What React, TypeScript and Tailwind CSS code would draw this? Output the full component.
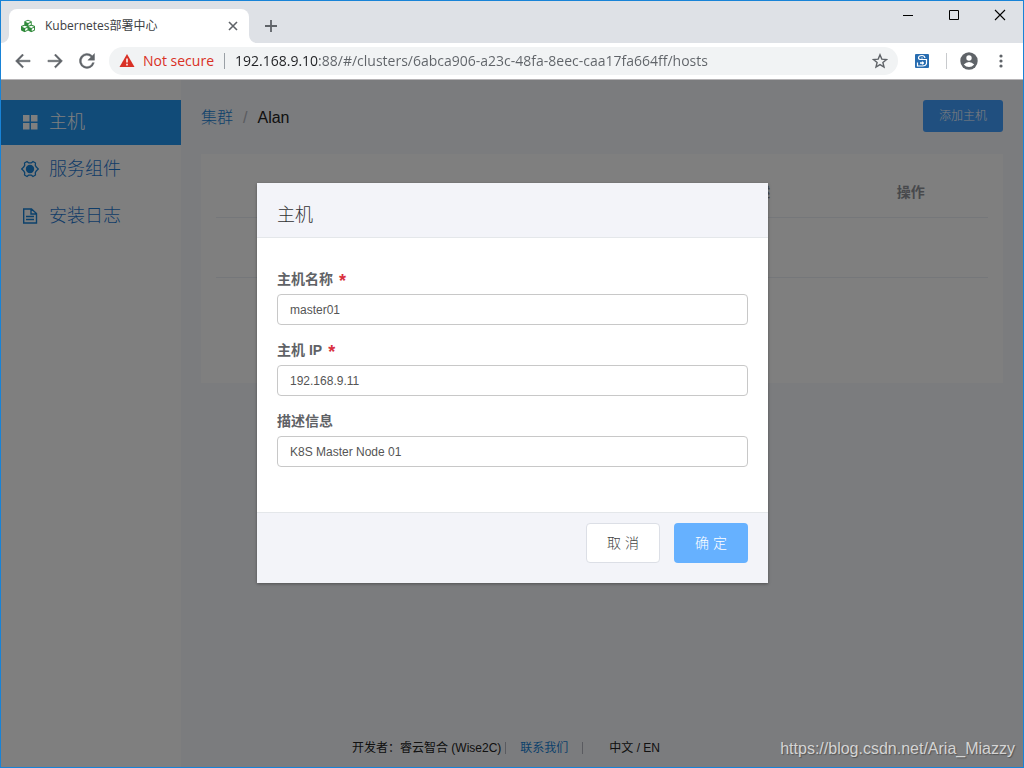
import type { ReactNode } from "react";
import { FaCubes } from "react-icons/fa";

const ui = "font-['Liberation_Sans','Noto_Sans_CJK_SC',sans-serif]";
const chromeFont = "font-['Open_Sans','Noto_Sans_CJK_SC',sans-serif]";

function WindowControls() {
  return (
    <div className="flex h-7 items-center">
      <button aria-label="Minimize" className="flex w-[46px] justify-center">
        <svg className="h-3 w-3" viewBox="0 0 12 12"><path d="M1 6.5H11" stroke="#000" /></svg>
      </button>
      <button aria-label="Maximize" className="flex w-[46px] justify-center">
        <svg className="h-3 w-3" viewBox="0 0 12 12"><path d="M1.5 1.5h9v9h-9z" fill="none" stroke="#000" /></svg>
      </button>
      <button aria-label="Close" className="flex w-[46px] justify-center">
        <svg className="h-3 w-3" viewBox="0 0 12 12"><path d="m1 1 10 10M11 1 1 11" stroke="#000" strokeWidth="1.1" /></svg>
      </button>
    </div>
  );
}

function TabStrip() {
  return (
    <div className={`${chromeFont} flex h-[42px] justify-between bg-[#dee1e6]`}>
      <div className="flex items-end">
        <svg className="h-2 w-2" viewBox="0 0 8 8" aria-hidden="true"><path d="M8 0v8H0A8 8 0 0 0 8 0" fill="#fff" /></svg>
        <div className="flex h-[34px] w-60 items-center rounded-t-lg bg-white pr-2.5 pl-3">
          <FaCubes className="h-3.5 w-3.5 text-[#2f8a3a]" aria-hidden="true" />
          <span className="ml-2.5 flex-1 text-xs text-[#3c4043]">Kubernetes部署中心</span>
          <button aria-label="Close tab">
            <svg className="h-3 w-3" viewBox="0 0 12 12"><path d="m2 2 8 8M10 2l-8 8" stroke="#5f6368" strokeWidth="1.6" /></svg>
          </button>
        </div>
        <svg className="h-2 w-2" viewBox="0 0 8 8" aria-hidden="true"><path d="M0 0v8h8A8 8 0 0 1 0 0" fill="#fff" /></svg>
        <button aria-label="New tab" className="flex h-[34px] w-7 items-center justify-center">
          <svg className="h-3.5 w-3.5" viewBox="0 0 14 14"><path d="M7 1v12M1 7h12" stroke="#5f6368" strokeWidth="1.8" /></svg>
        </button>
      </div>
      <WindowControls />
    </div>
  );
}

function NavButton({ label, d }: { label: string; d: string }) {
  return (
    <button aria-label={label} className="flex w-8 justify-center">
      <svg className="h-5 w-5" viewBox="0 0 24 24" fill="#5f6368" stroke="#5f6368" strokeWidth="0.5"><path d={d} /></svg>
    </button>
  );
}

function Toolbar() {
  return (
    <div className={`${chromeFont} flex h-[37px] items-center border-b border-[#b6b4b6] bg-white pr-3.5 pl-1.5`}>
      <NavButton label="Back" d="M20.5 11H6.8l5.9-5.9L11.3 3.7 3 12l8.3 8.3 1.4-1.4L6.8 13h13.7z" />
      <NavButton label="Forward" d="M3.5 11h13.7l-5.9-5.9 1.4-1.4L21 12l-8.3 8.3-1.4-1.4 5.9-5.9H3.5z" />
      <NavButton label="Reload" d="M18.4 5.6A9 9 0 1 0 20.7 14h-2.2a6.8 6.8 0 1 1-1.7-6.8L13 11h8V3z" />
      <div className="ml-1.5 flex h-7 flex-1 items-center rounded-full bg-[#f1f3f4] px-2.5">
        <svg className="h-4 w-4" viewBox="0 0 16 16" aria-hidden="true">
          <path d="M8 1 15.5 14H.5Z" fill="#d93025" />
          <path d="M8 5.5V9.5M8 10.8v1.6" stroke="#fff" strokeWidth="1.5" />
        </svg>
        <span className="ml-2 text-sm text-[#d93025]">Not secure</span>
        <span className="mr-2.5 ml-2.5 h-4 w-px bg-[#9aa0a6]" />
        <input
          aria-label="Address"
          className="min-w-0 flex-1 bg-linear-to-r from-[#202124] from-[83px] to-[#5f6368] to-[83px] bg-clip-text text-sm text-transparent outline-none"
          defaultValue="192.168.9.10:88/#/clusters/6abca906-a23c-48fa-8eec-caa17fa664ff/hosts"
        />
        <button aria-label="Bookmark this page">
          <svg className="h-4 w-4" viewBox="0 0 16 16" fill="none" stroke="#5f6368" strokeWidth="1.4">
            <path d="m8 1.8 1.8 4.3 4.7.4-3.6 3 1.1 4.6L8 11.6l-4 2.5 1.1-4.6-3.6-3 4.7-.4Z" />
          </svg>
        </button>
      </div>
      <button aria-label="Extension" className="ml-4">
        <svg className="h-4 w-4" viewBox="0 0 16 16">
          <rect x="1" y="1" width="14" height="14" rx="1" fill="#276cb0" />
          <path d="M11 5Q10.5 2.5 8 2.5 4.5 2.5 4.5 5 4.5 6.5 7 6.5H12.5V10.5Q12 13 8.5 13H3.5V9.5" fill="none" stroke="#fff" strokeWidth="1.2" />
          <path d="M8 4.5v1M6 10h4M8.5 8.5v3" stroke="#fff" strokeWidth="1.3" />
        </svg>
      </button>
      <span className="mx-4 h-4 w-px bg-[#c8cacd]" />
      <button aria-label="Profile" className="-ml-1">
        <svg className="h-5 w-5" viewBox="0 0 20 20">
          <circle cx="10" cy="10" r="8.7" fill="#5f6368" />
          <circle cx="10" cy="7" r="2.7" fill="#fff" />
          <path d="M4.8 13.5Q7 11 10 11t5.2 2.5Q13 16 10 16t-5.2-2.5" fill="#fff" />
        </svg>
      </button>
      <button aria-label="Menu" className="ml-3.5">
        <svg className="h-4 w-4" viewBox="0 0 16 16" fill="#5f6368">
          <circle cx="8" cy="3" r="1.6" /><circle cx="8" cy="8" r="1.6" /><circle cx="8" cy="13" r="1.6" />
        </svg>
      </button>
    </div>
  );
}

function SideLink({ active, icon, children }: { active?: boolean; icon: ReactNode; children: string }) {
  return (
    <a
      href="#hosts"
      className={`flex h-[45px] items-center gap-2.5 pb-0.5 pl-5 text-lg font-light ${active ? "bg-[#2296f0] text-white" : "text-[#1f78d0]"}`}
    >
      {icon}
      {children}
    </a>
  );
}

function Sidebar() {
  return (
    <nav className="flex w-[180px] shrink-0 flex-col gap-0.5 bg-white pt-5">
      <SideLink
        active
        icon={<svg className="h-[18px] w-[18px]" viewBox="0 0 18 18" fill="currentColor"><path d="M2 2h6.5v6.5H2zM10 2h6.5v6.5H10zM2 10h6.5v6.5H2zM10 10h6.5v6.5H10z" /></svg>}
      >
        主机
      </SideLink>
      <SideLink
        icon={
          <svg className="h-[18px] w-[18px]" viewBox="0 0 18 18">
            <circle cx="9" cy="9" r="4.2" fill="#1883d7" />
            <path d="M6 1.5 7.5 2.800h3L12 1.500 14.500 3 14.300 5.300 15.500 7.300 17.300 9 15.500 10.700 14.300 12.700 14.500 15 12 16.500 10.500 15.200h-3L6 16.500 3.500 15 3.700 12.700 2.500 10.700.7 9 2.500 7.300 3.700 5.300 3.500 3Z" fill="none" stroke="#1883d7" strokeWidth="1.3" strokeLinejoin="round" />
          </svg>
        }
      >
        服务组件
      </SideLink>
      <SideLink
        icon={
          <svg className="h-[18px] w-[18px]" viewBox="0 0 18 18" fill="none" stroke="#1883d7" strokeWidth="1.4">
            <path d="M2.7 2H10.500L15.500 6.500V16H2.700ZM10 2v5h5M5 9.500h8M5 12.500h8" />
          </svg>
        }
      >
        安装日志
      </SideLink>
    </nav>
  );
}

function HostsPage() {
  return (
    <main className="flex flex-1 flex-col px-5 pt-5">
      <div className="flex items-start justify-between">
        <div className="flex items-center gap-2.5 pt-1.5 text-base text-[#222]">
          <a href="#clusters" className="font-light text-[#1883d7]">集群</a>
          <span className="text-[#b4b7c0]">/</span>
          <span>Alan</span>
        </div>
        <button className="h-8 w-20 rounded-[3px] bg-[#409eff] text-xs font-light text-white">添加主机</button>
      </div>
      <div className="mt-[22px] bg-white px-[15px] pt-[13px] pb-[105px]">
        <table className="w-full table-fixed text-sm font-bold text-[#909399]">
          <thead>
            <tr className="h-[50px] border-b border-[#ebeef5]">
              <th /><th /><th /><th>描述</th><th>操作</th>
            </tr>
          </thead>
          <tbody>
            <tr className="h-[60px] border-b border-[#ebeef5]"><td colSpan={5} /></tr>
          </tbody>
        </table>
      </div>
      <footer className="mt-auto mr-48 flex h-[38px] items-center justify-center text-xs text-[#222]">
        开发者：睿云智合 (Wise2C)
        <span className="mr-3.5 ml-1 h-3 w-px bg-[#b4b7c0]" />
        <a href="#contact" className="text-[#1883d7]">联系我们</a>
        <span className="mr-[26px] ml-3.5 h-3 w-px bg-[#b4b7c0]" />
        <span>中文 / EN</span>
      </footer>
    </main>
  );
}

function Field({ id, label, value, required }: { id: string; label: string; value: string; required?: boolean }) {
  return (
    <div>
      <label htmlFor={id} className="flex h-6 items-start gap-1.5 text-sm leading-[18px] font-bold text-[#606266]">
        {label}
        {required && <span className="pt-0.5 text-lg leading-[18px] text-[#d9303e]">*</span>}
      </label>
      <input
        id={id}
        defaultValue={value}
        className="block h-[31px] w-full rounded border border-[#c8c8c8] bg-white px-3 text-xs text-[#555] outline-none"
      />
    </div>
  );
}

function HostDialog() {
  return (
    <div className="absolute inset-0 flex items-start justify-center bg-black/50 pt-[103px]">
      <form role="dialog" aria-labelledby="dialog-title" className="ml-px w-1/2 bg-white shadow-[0_1px_3px_rgba(0,0,0,0.35)]">
        <h2 id="dialog-title" className="flex h-[55px] items-center border-b border-[#e4e7ea] bg-[#f3f4f9] px-5 pt-2.5 text-lg font-light text-[#303133]">
          主机
        </h2>
        <div className="flex flex-col gap-4 px-5 pt-8 pb-[45px]">
          <Field id="name" label="主机名称" value="master01" required />
          <Field id="ip" label="主机 IP" value="192.168.9.11" required />
          <Field id="description" label="描述信息" value="K8S Master Node 01" />
        </div>
        <div className="flex justify-end gap-3.5 border-t border-[#e4e7ea] bg-[#f3f4f9] px-5 pt-2.5 pb-5">
          <button type="button" className="h-10 w-[74px] rounded border border-[#dcdfe6] bg-white text-sm font-light text-[#444]">取 消</button>
          <button type="button" className="h-10 w-[74px] rounded bg-[#66b1ff] text-sm font-light text-white">确 定</button>
        </div>
      </form>
    </div>
  );
}

export default function App() {
  return (
    <div className={`${ui} flex min-h-screen flex-col border border-[#1883d7]`}>
      <TabStrip />
      <Toolbar />
      <div className="relative flex flex-1 bg-[#f6f8fc]">
        <Sidebar />
        <HostsPage />
        <HostDialog />
        <div className="absolute right-2 bottom-1.5 text-base text-[#d4d4d4] [text-shadow:1px_1px_1px_#555]">
          https://blog.csdn.net/Aria_Miazzy
        </div>
      </div>
    </div>
  );
}
